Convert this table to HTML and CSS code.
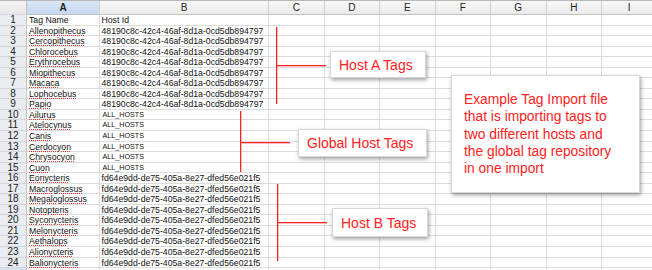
FILE: index.html
```html
<!DOCTYPE html>
<html>
<head>
<meta charset="utf-8">
<link rel="stylesheet" href="styles.css">
</head>
<body>
<div class="sheet">
  <div class="row head">
    <span class="n corner"></span><span class="a sel">A</span><span class="b">B</span><span class="e">C</span><span class="e">D</span><span class="e">E</span><span class="e">F</span><span class="e">G</span><span class="e">H</span><span class="e">I</span>
  </div>
  <div class="row"><span class="n">1</span><span class="a plain">Tag Name</span><span class="b">Host Id</span><span class="e"></span><span class="e"></span><span class="e"></span><span class="e"></span><span class="e"></span><span class="e"></span><span class="e"></span></div>
  <div class="row"><span class="n">2</span><span class="a"><u>Allenopithecus</u></span><span class="b">48190c8c-42c4-46af-8d1a-0cd5db894797</span><span class="e"></span><span class="e"></span><span class="e"></span><span class="e"></span><span class="e"></span><span class="e"></span><span class="e"></span></div>
  <div class="row"><span class="n">3</span><span class="a"><u>Cercopithecus</u></span><span class="b">48190c8c-42c4-46af-8d1a-0cd5db894797</span><span class="e"></span><span class="e"></span><span class="e"></span><span class="e"></span><span class="e"></span><span class="e"></span><span class="e"></span></div>
  <div class="row"><span class="n">4</span><span class="a"><u>Chlorocebus</u></span><span class="b">48190c8c-42c4-46af-8d1a-0cd5db894797</span><span class="e"></span><span class="e"></span><span class="e"></span><span class="e"></span><span class="e"></span><span class="e"></span><span class="e"></span></div>
  <div class="row"><span class="n">5</span><span class="a"><u>Erythrocebus</u></span><span class="b">48190c8c-42c4-46af-8d1a-0cd5db894797</span><span class="e"></span><span class="e"></span><span class="e"></span><span class="e"></span><span class="e"></span><span class="e"></span><span class="e"></span></div>
  <div class="row"><span class="n">6</span><span class="a"><u>Miopithecus</u></span><span class="b">48190c8c-42c4-46af-8d1a-0cd5db894797</span><span class="e"></span><span class="e"></span><span class="e"></span><span class="e"></span><span class="e"></span><span class="e"></span><span class="e"></span></div>
  <div class="row"><span class="n">7</span><span class="a"><u>Macaca</u></span><span class="b">48190c8c-42c4-46af-8d1a-0cd5db894797</span><span class="e"></span><span class="e"></span><span class="e"></span><span class="e"></span><span class="e"></span><span class="e"></span><span class="e"></span></div>
  <div class="row"><span class="n">8</span><span class="a"><u>Lophocebus</u></span><span class="b">48190c8c-42c4-46af-8d1a-0cd5db894797</span><span class="e"></span><span class="e"></span><span class="e"></span><span class="e"></span><span class="e"></span><span class="e"></span><span class="e"></span></div>
  <div class="row"><span class="n">9</span><span class="a"><u>Papio</u></span><span class="b">48190c8c-42c4-46af-8d1a-0cd5db894797</span><span class="e"></span><span class="e"></span><span class="e"></span><span class="e"></span><span class="e"></span><span class="e"></span><span class="e"></span></div>
  <div class="row"><span class="n">10</span><span class="a"><u>Ailurus</u></span><span class="b all">ALL_HOSTS</span><span class="e"></span><span class="e"></span><span class="e"></span><span class="e"></span><span class="e"></span><span class="e"></span><span class="e"></span></div>
  <div class="row"><span class="n">11</span><span class="a"><u>Atelocynus</u></span><span class="b all">ALL_HOSTS</span><span class="e"></span><span class="e"></span><span class="e"></span><span class="e"></span><span class="e"></span><span class="e"></span><span class="e"></span></div>
  <div class="row"><span class="n">12</span><span class="a"><u>Canis</u></span><span class="b all">ALL_HOSTS</span><span class="e"></span><span class="e"></span><span class="e"></span><span class="e"></span><span class="e"></span><span class="e"></span><span class="e"></span></div>
  <div class="row"><span class="n">13</span><span class="a"><u>Cerdocyon</u></span><span class="b all">ALL_HOSTS</span><span class="e"></span><span class="e"></span><span class="e"></span><span class="e"></span><span class="e"></span><span class="e"></span><span class="e"></span></div>
  <div class="row"><span class="n">14</span><span class="a"><u>Chrysocyon</u></span><span class="b all">ALL_HOSTS</span><span class="e"></span><span class="e"></span><span class="e"></span><span class="e"></span><span class="e"></span><span class="e"></span><span class="e"></span></div>
  <div class="row"><span class="n">15</span><span class="a"><u>Cuon</u></span><span class="b all">ALL_HOSTS</span><span class="e"></span><span class="e"></span><span class="e"></span><span class="e"></span><span class="e"></span><span class="e"></span><span class="e"></span></div>
  <div class="row"><span class="n">16</span><span class="a"><u>Eonycteris</u></span><span class="b">fd64e9dd-de75-405a-8e27-dfed56e021f5</span><span class="e"></span><span class="e"></span><span class="e"></span><span class="e"></span><span class="e"></span><span class="e"></span><span class="e"></span></div>
  <div class="row"><span class="n">17</span><span class="a"><u>Macroglossus</u></span><span class="b">fd64e9dd-de75-405a-8e27-dfed56e021f5</span><span class="e"></span><span class="e"></span><span class="e"></span><span class="e"></span><span class="e"></span><span class="e"></span><span class="e"></span></div>
  <div class="row"><span class="n">18</span><span class="a"><u>Megaloglossus</u></span><span class="b">fd64e9dd-de75-405a-8e27-dfed56e021f5</span><span class="e"></span><span class="e"></span><span class="e"></span><span class="e"></span><span class="e"></span><span class="e"></span><span class="e"></span></div>
  <div class="row"><span class="n">19</span><span class="a"><u>Notopteris</u></span><span class="b">fd64e9dd-de75-405a-8e27-dfed56e021f5</span><span class="e"></span><span class="e"></span><span class="e"></span><span class="e"></span><span class="e"></span><span class="e"></span><span class="e"></span></div>
  <div class="row"><span class="n">20</span><span class="a"><u>Syconycteris</u></span><span class="b">fd64e9dd-de75-405a-8e27-dfed56e021f5</span><span class="e"></span><span class="e"></span><span class="e"></span><span class="e"></span><span class="e"></span><span class="e"></span><span class="e"></span></div>
  <div class="row"><span class="n">21</span><span class="a"><u>Melonycteris</u></span><span class="b">fd64e9dd-de75-405a-8e27-dfed56e021f5</span><span class="e"></span><span class="e"></span><span class="e"></span><span class="e"></span><span class="e"></span><span class="e"></span><span class="e"></span></div>
  <div class="row"><span class="n">22</span><span class="a"><u>Aethalops</u></span><span class="b">fd64e9dd-de75-405a-8e27-dfed56e021f5</span><span class="e"></span><span class="e"></span><span class="e"></span><span class="e"></span><span class="e"></span><span class="e"></span><span class="e"></span></div>
  <div class="row"><span class="n">23</span><span class="a"><u>Alionycteris</u></span><span class="b">fd64e9dd-de75-405a-8e27-dfed56e021f5</span><span class="e"></span><span class="e"></span><span class="e"></span><span class="e"></span><span class="e"></span><span class="e"></span><span class="e"></span></div>
  <div class="row"><span class="n">24</span><span class="a"><u>Balionycteris</u></span><span class="b">fd64e9dd-de75-405a-8e27-dfed56e021f5</span><span class="e"></span><span class="e"></span><span class="e"></span><span class="e"></span><span class="e"></span><span class="e"></span><span class="e"></span></div>
  <div class="row"><span class="n last"></span><span class="a"></span><span class="b"></span><span class="e"></span><span class="e"></span><span class="e"></span><span class="e"></span><span class="e"></span><span class="e"></span><span class="e"></span></div>

  <div class="vline va"></div><div class="hline ha"></div>
  <div class="callout ca">Host A Tags</div>
  <div class="vline vg"></div><div class="hline hg"></div>
  <div class="callout cg">Global Host Tags</div>
  <div class="vline vb"></div><div class="hline hb"></div>
  <div class="callout cb">Host B Tags</div>
  <div class="note">Example Tag Import file that is importing tags to two different hosts and the global tag repository in one import</div>
</div>
</body>
</html>
```
FILE: styles.css
```css
html, body {
  margin: 0;
  padding: 0;
  background: #fff;
  overflow: hidden;
}
.sheet {
  position: relative;
  width: 652px;
  height: 270px;
  overflow: hidden;
  font-family: "Liberation Sans", Arial, sans-serif;
  color: #111;
}
.row {
  display: flex;
  height: 10.55px;
  font-size: 8.7px;
  line-height: 10.55px;
}
.row > span {
  box-sizing: border-box;
  flex: none;
  height: 100%;
  border-right: 1px solid #dcdcdc;
  border-bottom: 1px solid #dcdcdc;
  white-space: nowrap;
  overflow: visible;
}
.n {
  width: 27px;
  text-align: center;
  background: #e9ecf1;
  border-right-color: #c4c4c4 !important;
  border-bottom-color: #d2d5da !important;
  font-size: 10px;
  color: #222;
}
.n.last { background: #d6e2f2; }
.a {
  width: 73px;
  padding-left: 2px;
}
.a u {
  text-decoration: underline dotted #e8302f;
  text-decoration-thickness: 1px;
  text-underline-offset: 1px;
}
.b {
  width: 169px;
  padding-left: 1.5px;
}
.b.all {
  font-size: 7.2px;
  padding-left: 2.5px;
}
.e { width: 55.5px; }

.row.head {
  height: 15px;
  line-height: 13px;
  border-top: 1px solid #b8b8b8;
  box-sizing: border-box;
  background: linear-gradient(#f8f8f8, #e9e9e9);
  font-size: 10px;
}
.row.head > span {
  text-align: center;
  padding: 0;
  border-right-color: #d0d0d0;
  border-bottom-color: #c2c2c2;
  color: #222;
}
.row.head .corner {
  background: linear-gradient(#f4f4f4, #e6e6e6);
}
.row.head .sel {
  background: linear-gradient(#d9e6f6, #c6d9f1);
  font-weight: bold;
}

.vline, .hline {
  position: absolute;
  background: #ff2222;
}
.vline {
  width: 1px;
  box-shadow: 1px 0 0 rgba(255, 60, 60, 0.35);
}
.hline {
  height: 1px;
  box-shadow: 0 1px 0 rgba(255, 60, 60, 0.35);
}
.va { left: 276px; top: 27px; height: 77px; }
.ha { left: 276px; top: 65px; width: 50px; }
.vg { left: 240px; top: 111px; height: 61px; }
.hg { left: 240px; top: 142px; width: 50px; }
.vb { left: 277px; top: 184px; height: 77px; }
.hb { left: 277px; top: 222px; width: 50px; }

.callout, .note {
  position: absolute;
  box-sizing: border-box;
  background: #fff;
  border: 1px solid #d8d8d8;
  box-shadow: 1px 2px 4px rgba(0, 0, 0, 0.38);
  color: #ff2121;
  font-size: 14px;
  white-space: nowrap;
}
.callout {
  display: flex;
  align-items: center;
  padding-left: 8px;
}
.ca { left: 330px; top: 51px; width: 96px; height: 27px; }
.cg { left: 298px; top: 129px; width: 129px; height: 28px; }
.cb { left: 332px; top: 208px; width: 96px; height: 29px; }
.note {
  left: 451px;
  top: 75px;
  width: 189px;
  height: 118px;
  padding: 15px 14px 0 12px;
  white-space: normal;
  line-height: 17.3px;
  font-size: 13.8px;
}
```
